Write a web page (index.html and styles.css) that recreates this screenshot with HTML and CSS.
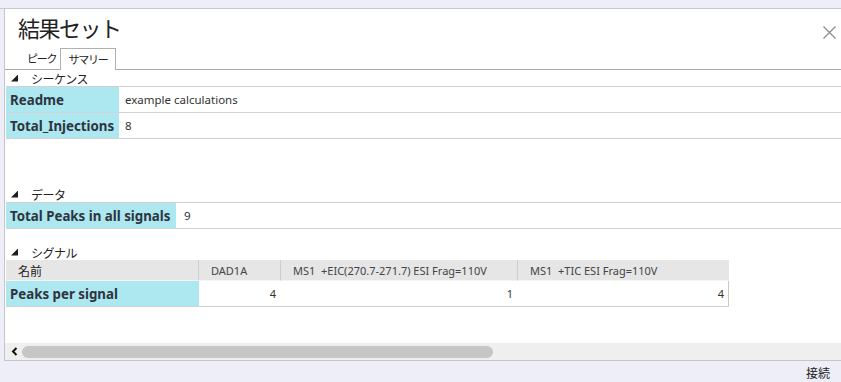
FILE: index.html
```html
<!DOCTYPE html>
<html lang="ja">
<head>
  <meta charset="UTF-8">
  <title>結果セット</title>
  <link rel="stylesheet" href="styles.css">
</head>
<body>
  <div class="topbar"></div>
  <div class="window">
    <div class="title-bar">
      <h1>結果セット</h1>
      <svg class="close" width="13" height="13" viewBox="0 0 13 13">
        <path d="M0.5 0.5 L12.5 12.5 M12.5 0.5 L0.5 12.5" stroke="#8a8a8a" stroke-width="1.2" fill="none"/>
      </svg>
    </div>
    <div class="tabs">
      <span class="tab">ピーク</span>
      <span class="tab active">サマリー</span>
    </div>

    <div class="content">
      <div class="sec-head"><span class="tri"></span>シーケンス</div>
      <div class="kv seq">
        <div class="row"><div class="key">Readme</div><div class="val">example calculations</div></div>
        <div class="row"><div class="key">Total_Injections</div><div class="val">8</div></div>
      </div>

      <div class="sec-head data-head"><span class="tri"></span>データ</div>
      <div class="kv data">
        <div class="row"><div class="key">Total Peaks in all signals</div><div class="val">9</div></div>
      </div>

      <div class="sec-head signal-head"><span class="tri"></span>シグナル</div>
      <div class="grid">
        <div class="th">名前</div>
        <div class="th">DAD1A</div>
        <div class="th">MS1&nbsp; +EIC(270.7-271.7) ESI Frag=110V</div>
        <div class="th">MS1&nbsp; +TIC ESI Frag=110V</div>
        <div class="td key">Peaks per signal</div>
        <div class="td num">4</div>
        <div class="td num">1</div>
        <div class="td num">4</div>
      </div>
    </div>

    <div class="hscroll">
      <svg class="arrow" width="7" height="9" viewBox="0 0 7 9">
        <path d="M5.5 1 L2 4.5 L5.5 8" stroke="#111" stroke-width="2" fill="none"/>
      </svg>
      <div class="thumb"></div>
    </div>
  </div>
  <div class="status">接続</div>
</body>
</html>
```

FILE: styles.css
```css
* { box-sizing: border-box; }

body {
  margin: 0;
  background: #eeeef8;
  font-family: "Noto Sans", "Noto Sans CJK JP", sans-serif;
  color: #2b2b33;
  overflow: hidden;
}

.topbar {
  height: 9px;
  border-bottom: 1px solid #c8c8d0;
}

.window {
  margin-left: 4px;
  height: 352px;
  background: #fff;
  border-left: 1px solid #c6c6c6;
  border-bottom: 1px solid #c6c6c6;
  display: flex;
  flex-direction: column;
}

.title-bar {
  height: 39px;
  display: flex;
  justify-content: space-between;
  align-items: flex-start;
  padding: 0 5px 0 13px;
}

h1 {
  margin: 0;
  padding-top: 3px;
  font-family: "Noto Sans CJK JP", sans-serif;
  font-weight: 400;
  font-size: 22px;
  line-height: 30px;
  letter-spacing: -1.5px;
  color: #222;
}

.close { margin-top: 17px; }

.tabs {
  height: 22px;
  display: flex;
  align-items: flex-end;
  padding-left: 18px;
  border-bottom: 1px solid #a9a9a9;
  font-family: "Noto Sans CJK JP", sans-serif;
  font-size: 11px;
  letter-spacing: -1.2px;
}

.tab {
  padding: 0 4px 2px;
  line-height: 17px;
  color: #222;
}

.tab.active {
  padding: 2px 7px 3px;
  background: #fff;
  border: 1px solid #b0b0b0;
  border-bottom: none;
  margin-bottom: -1px;
  height: 22px;
}

.content {
  flex: 1;
  overflow: hidden;
}

.sec-head {
  height: 16px;
  display: flex;
  align-items: center;
  padding-left: 6px;
  font-family: "Noto Sans CJK JP", sans-serif;
  font-size: 12px;
  letter-spacing: -0.5px;
  color: #222;
}

.tri {
  width: 7px;
  height: 7px;
  margin-right: 13px;
  background: #1e1e1e;
  clip-path: polygon(100% 0, 100% 100%, 0 100%);
}

.data-head { margin-top: 47px; }
.signal-head { margin-top: 15px; }

.kv {
  margin-left: 1px;
  border-top: 1px solid #d2d2d2;
}

.row {
  display: flex;
  height: 26px;
  border-bottom: 1px solid #d2d2d2;
}

.key {
  background: #ade7ef;
  font-weight: 700;
  font-size: 13.3px;
  color: #2e3440;
  padding-left: 4px;
  display: flex;
  align-items: center;
  white-space: nowrap;
}

.seq .key { width: 113px; }
.data .key { width: 170px; }

.val {
  font-size: 11.5px;
  padding-left: 6px;
  display: flex;
  align-items: center;
  color: #333;
}

.data .val { padding-left: 8px; }

.grid {
  margin-left: 1px;
  display: grid;
  grid-template-columns: 193px 82px 237px 211px;
  grid-template-rows: 21px 26px;
  width: 723px;
  border-right: 1px solid #c8c8c8;
}

.th {
  background: #e6e6e6;
  border-right: 1px solid #cdcdcd;
  border-bottom: 1px solid #f4f4f4;
  padding-left: 12px;
  font-size: 11px;
  color: #444;
  display: flex;
  align-items: center;
  white-space: nowrap;
}

.th:first-child {
  padding-left: 12px;
  font-family: "Noto Sans CJK JP", sans-serif;
  font-size: 12px;
  color: #222;
}

.th:nth-child(4) { border-right: none; }

.td { border-bottom: 1px solid #d2d2d2; }

.num {
  font-size: 11px;
  color: #333;
  display: flex;
  align-items: center;
  justify-content: flex-end;
  padding-right: 5px;
}

.hscroll {
  height: 17px;
  background: #efefef;
  display: flex;
  align-items: center;
  padding-left: 6px;
}

.arrow { margin-right: 4px; }

.thumb {
  width: 471px;
  height: 12px;
  border-radius: 6px;
  background: #c6c6c6;
}

.status {
  text-align: right;
  padding: 4px 11px 0 0;
  font-family: "Noto Sans CJK JP", sans-serif;
  font-size: 12px;
  line-height: 16px;
  color: #222;
}
```
